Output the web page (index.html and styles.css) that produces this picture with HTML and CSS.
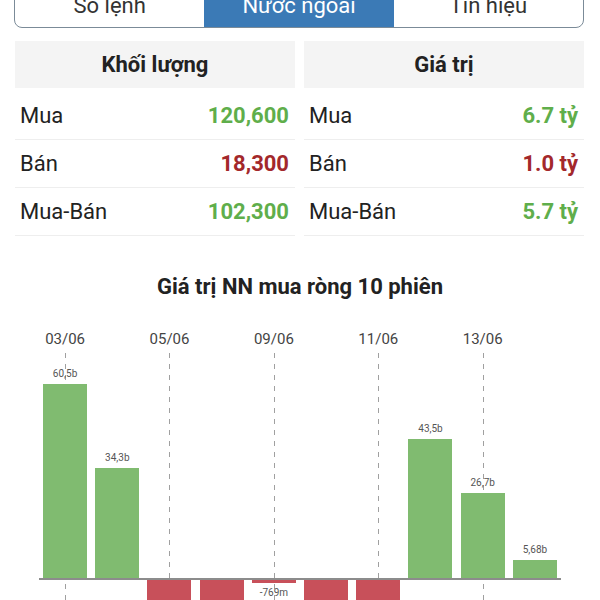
FILE: index.html
```html
<!DOCTYPE html>
<html lang="vi">
<head>
  <meta charset="UTF-8">
  <title>Nước ngoài</title>
  <link rel="stylesheet" href="styles.css">
</head>
<body>

<!-- Tabs -->
<div class="tabs">
  <div class="tab">Số lệnh</div>
  <div class="tab active">Nước ngoài</div>
  <div class="tab">Tín hiệu</div>
</div>

<!-- Summary tables -->
<div class="tables">
  <div class="panel">
    <div class="panel-head">Khối lượng</div>
    <div class="row"><span>Mua</span><span class="num up">120,600</span></div>
    <div class="row"><span>Bán</span><span class="num down">18,300</span></div>
    <div class="row"><span>Mua-Bán</span><span class="num up">102,300</span></div>
  </div>
  <div class="panel">
    <div class="panel-head">Giá trị</div>
    <div class="row"><span>Mua</span><span class="num up">6.7 tỷ</span></div>
    <div class="row"><span>Bán</span><span class="num down">1.0 tỷ</span></div>
    <div class="row"><span>Mua-Bán</span><span class="num up">5.7 tỷ</span></div>
  </div>
</div>

<!-- Chart -->
<h2 class="chart-title">Giá trị NN mua ròng 10 phiên</h2>
<div class="chart" id="chart"></div>

<script>
  // net foreign buy value per session (billion)
  const sessions = [
    { date: '03/06', value: 60.5, label: '60,5b' },
    { date: '',      value: 34.3, label: '34,3b' },
    { date: '05/06', value: -25,  label: '' },
    { date: '',      value: -25,  label: '' },
    { date: '09/06', value: -0.77, label: '-769m' },
    { date: '',      value: -25,  label: '' },
    { date: '11/06', value: -25,  label: '' },
    { date: '',      value: 43.5, label: '43,5b' },
    { date: '13/06', value: 26.7, label: '26,7b' },
    { date: '',      value: 5.68, label: '5,68b' }
  ];
  const scale = 3.2;

  const chart = document.getElementById('chart');
  sessions.forEach(s => {
    const col = document.createElement('div');
    col.className = 'col' + (s.date ? ' mark' : '');
    const h = Math.max(3, Math.round(Math.abs(s.value) * scale));
    const bar = `<div class="bar ${s.value >= 0 ? 'green' : 'red'}" style="height:${h}px"></div>`;
    const label = s.label ? `<span class="val">${s.label}</span>` : '';
    col.innerHTML = `<div class="date">${s.date}</div>
      <div class="plot">
        <div class="pos">${s.value >= 0 ? label + bar : ''}</div>
        <div class="neg">${s.value < 0 ? bar + label : ''}</div>
      </div>`;
    chart.appendChild(col);
  });
</script>

</body>
</html>
```

FILE: styles.css
```css
* { margin: 0; padding: 0; box-sizing: border-box; }
body {
  font-family: Roboto, "Noto Sans", sans-serif;
  background: #fff;
  color: #222;
  width: 600px;
  height: 600px;
  overflow: hidden;
}

/* Tabs */
.tabs {
  display: flex;
  height: 45px;
  margin: -17px 16px 0 14px;
  border: 1px solid #7b8b98;
  border-radius: 8px;
  overflow: hidden;
}
.tab {
  flex: 1;
  display: flex;
  align-items: center;
  justify-content: center;
  font-size: 22px;
  color: #333;
}
.tab.active { background: #3b7ab6; color: #fff; }

/* Tables */
.tables {
  display: flex;
  gap: 9px;
  margin: 13px 16px 0 15px;
}
.panel { flex: 1; }
.panel-head {
  height: 47px;
  margin-bottom: 4px;
  background: #f4f4f4;
  display: flex;
  align-items: center;
  justify-content: center;
  font-size: 22px;
  font-weight: bold;
  color: #222;
}
.row {
  height: 48px;
  display: flex;
  align-items: center;
  justify-content: space-between;
  padding: 0 6px 0 5px;
  border-bottom: 1px solid #eeeeee;
  font-size: 22px;
  color: #222;
}
.num { font-weight: bold; }
.num.up { color: #5fae4b; }
.num.down { color: #a3282b; }

/* Chart */
.chart-title {
  margin-top: 38px;
  text-align: center;
  font-size: 22px;
  line-height: 26px;
  font-weight: bold;
  color: #222;
}
.chart {
  display: grid;
  grid-template-columns: repeat(10, 1fr);
  width: 522px;
  margin: 27px 0 0 39px;
}
.col { display: flex; flex-direction: column; align-items: stretch; }
.date {
  height: 24px;
  line-height: 24px;
  text-align: center;
  font-size: 15px;
  color: #444;
  white-space: nowrap;
}
.plot { position: relative; margin-top: 2px; }
.col.mark .plot::before {
  content: "";
  position: absolute;
  left: 50%;
  top: 0;
  bottom: 0;
  width: 1px;
  background: repeating-linear-gradient(to bottom, #a0a0a0 0 5px, transparent 5px 11px);
}
.pos {
  height: 227px;
  display: flex;
  flex-direction: column;
  justify-content: flex-end;
  align-items: center;
  border-bottom: 2px solid #8c8c8c;
}
.neg {
  height: 80px;
  display: flex;
  flex-direction: column;
  align-items: center;
}
.bar { width: 44px; position: relative; z-index: 1; }
.bar.green { background: #80bb70; }
.bar.red { background: #c8505a; }
.val {
  font-size: 10px;
  line-height: 12px;
  color: #555;
  margin: 0 0 4px;
  position: relative;
  z-index: 1;
}
.neg .val { margin: 4px 0 0; }
```
